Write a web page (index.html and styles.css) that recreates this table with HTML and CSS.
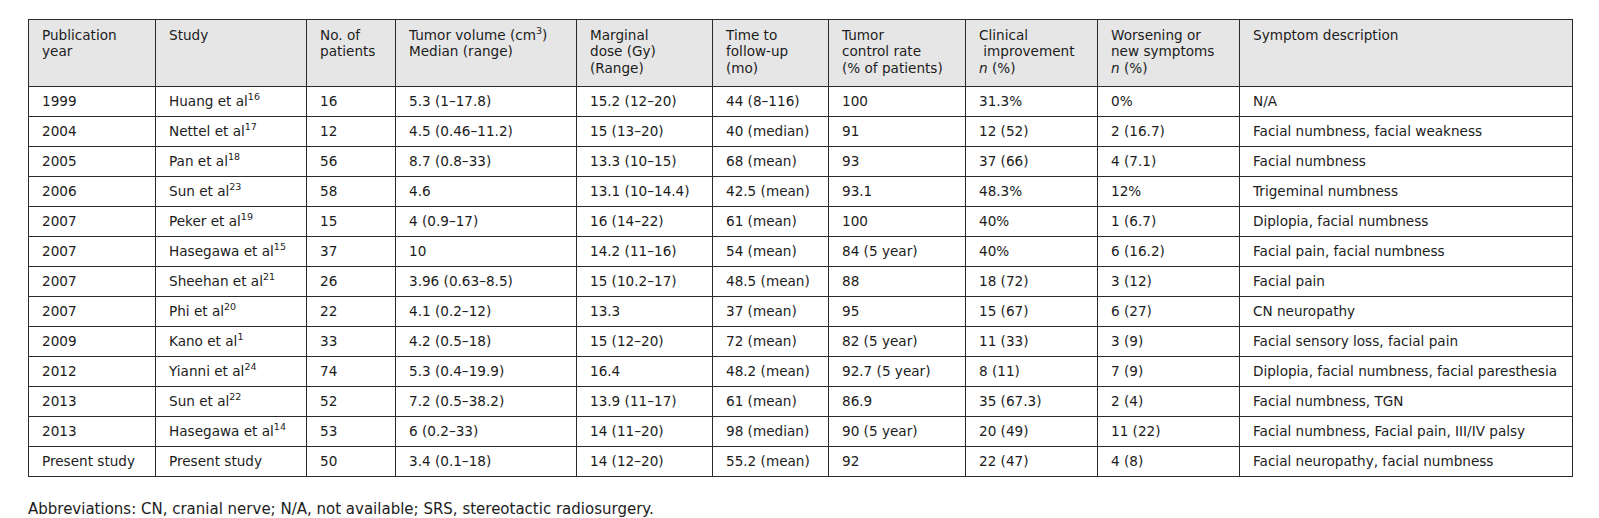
FILE: index.html
```html
<!DOCTYPE html>
<html>
<head>
<meta charset="utf-8">
<link rel="stylesheet" href="styles.css">
</head>
<body>
<div class="page">
<table class="data">
<colgroup>
<col class="c1"><col class="c2"><col class="c3"><col class="c4"><col class="c5"><col class="c6"><col class="c7"><col class="c8"><col class="c9"><col class="c10">
</colgroup>
<thead>
<tr>
<th>Publication<br>year</th>
<th>Study</th>
<th>No. of<br>patients</th>
<th>Tumor volume (cm<sup>3</sup>)<br>Median (range)</th>
<th>Marginal<br>dose (Gy)<br>(Range)</th>
<th>Time to<br>follow-up<br>(mo)</th>
<th>Tumor<br>control rate<br>(% of patients)</th>
<th>Clinical<br>&nbsp;improvement<br><i>n</i> (%)</th>
<th>Worsening or<br>new symptoms<br><i>n</i> (%)</th>
<th>Symptom description</th>
</tr>
</thead>
<tbody>
<tr><td>1999</td><td>Huang et al<sup>16</sup></td><td>16</td><td>5.3 (1–17.8)</td><td>15.2 (12–20)</td><td>44 (8–116)</td><td>100</td><td>31.3%</td><td>0%</td><td>N/A</td></tr>
<tr><td>2004</td><td>Nettel et al<sup>17</sup></td><td>12</td><td>4.5 (0.46–11.2)</td><td>15 (13–20)</td><td>40 (median)</td><td>91</td><td>12 (52)</td><td>2 (16.7)</td><td>Facial numbness, facial weakness</td></tr>
<tr><td>2005</td><td>Pan et al<sup>18</sup></td><td>56</td><td>8.7 (0.8–33)</td><td>13.3 (10–15)</td><td>68 (mean)</td><td>93</td><td>37 (66)</td><td>4 (7.1)</td><td>Facial numbness</td></tr>
<tr><td>2006</td><td>Sun et al<sup>23</sup></td><td>58</td><td>4.6</td><td>13.1 (10–14.4)</td><td>42.5 (mean)</td><td>93.1</td><td>48.3%</td><td>12%</td><td>Trigeminal numbness</td></tr>
<tr><td>2007</td><td>Peker et al<sup>19</sup></td><td>15</td><td>4 (0.9–17)</td><td>16 (14–22)</td><td>61 (mean)</td><td>100</td><td>40%</td><td>1 (6.7)</td><td>Diplopia, facial numbness</td></tr>
<tr><td>2007</td><td>Hasegawa et al<sup>15</sup></td><td>37</td><td>10</td><td>14.2 (11–16)</td><td>54 (mean)</td><td>84 (5 year)</td><td>40%</td><td>6 (16.2)</td><td>Facial pain, facial numbness</td></tr>
<tr><td>2007</td><td>Sheehan et al<sup>21</sup></td><td>26</td><td>3.96 (0.63–8.5)</td><td>15 (10.2–17)</td><td>48.5 (mean)</td><td>88</td><td>18 (72)</td><td>3 (12)</td><td>Facial pain</td></tr>
<tr><td>2007</td><td>Phi et al<sup>20</sup></td><td>22</td><td>4.1 (0.2–12)</td><td>13.3</td><td>37 (mean)</td><td>95</td><td>15 (67)</td><td>6 (27)</td><td>CN neuropathy</td></tr>
<tr><td>2009</td><td>Kano et al<sup>1</sup></td><td>33</td><td>4.2 (0.5–18)</td><td>15 (12–20)</td><td>72 (mean)</td><td>82 (5 year)</td><td>11 (33)</td><td>3 (9)</td><td>Facial sensory loss, facial pain</td></tr>
<tr><td>2012</td><td>Yianni et al<sup>24</sup></td><td>74</td><td>5.3 (0.4–19.9)</td><td>16.4</td><td>48.2 (mean)</td><td>92.7 (5 year)</td><td>8 (11)</td><td>7 (9)</td><td>Diplopia, facial numbness, facial paresthesia</td></tr>
<tr><td>2013</td><td>Sun et al<sup>22</sup></td><td>52</td><td>7.2 (0.5–38.2)</td><td>13.9 (11–17)</td><td>61 (mean)</td><td>86.9</td><td>35 (67.3)</td><td>2 (4)</td><td>Facial numbness, TGN</td></tr>
<tr><td>2013</td><td>Hasegawa et al<sup>14</sup></td><td>53</td><td>6 (0.2–33)</td><td>14 (11–20)</td><td>98 (median)</td><td>90 (5 year)</td><td>20 (49)</td><td>11 (22)</td><td>Facial numbness, Facial pain, III/IV palsy</td></tr>
<tr><td>Present study</td><td>Present study</td><td>50</td><td>3.4 (0.1–18)</td><td>14 (12–20)</td><td>55.2 (mean)</td><td>92</td><td>22 (47)</td><td>4 (8)</td><td>Facial neuropathy, facial numbness</td></tr>
</tbody>
</table>
<p class="note">Abbreviations: CN, cranial nerve; N/A, not available; SRS, stereotactic radiosurgery.</p>
</div>
</body>
</html>
```

FILE: styles.css
```css
html, body {
  margin: 0;
  padding: 0;
  background: #ffffff;
}
.page {
  padding: 19px 0 0 28px;
  font-family: "DejaVu Sans", "Open Sans", sans-serif;
  font-size: 13.6px;
  color: #1c1c1c;
}
.data {
  border-collapse: collapse;
  table-layout: fixed;
  width: 1544px;
  border: 1px solid #2a2a2a;
}
.c1 { width: 127px; }
.c2 { width: 151px; }
.c3 { width: 89px; }
.c4 { width: 181px; }
.c5 { width: 136px; }
.c6 { width: 116px; }
.c7 { width: 137px; }
.c8 { width: 132px; }
.c9 { width: 142px; }
.c10 { width: 333px; }
.data th,
.data td {
  border: 1px solid #2a2a2a;
  text-align: left;
  padding: 0 4px 0 13px;
  white-space: nowrap;
}
.data th {
  background: #e6e6e6;
  font-weight: normal;
  vertical-align: top;
  line-height: 16.4px;
  height: 67px;
  padding-top: 7px;
  box-sizing: border-box;
}
.data td {
  height: 30px;
  line-height: 17px;
  box-sizing: border-box;
  vertical-align: middle;
}
.data sup {
  font-size: 9.5px;
  line-height: 0;
  vertical-align: 6px;
}
.note {
  margin: 23px 0 0 0;
  font-size: 15px;
  line-height: 18px;
}
```
